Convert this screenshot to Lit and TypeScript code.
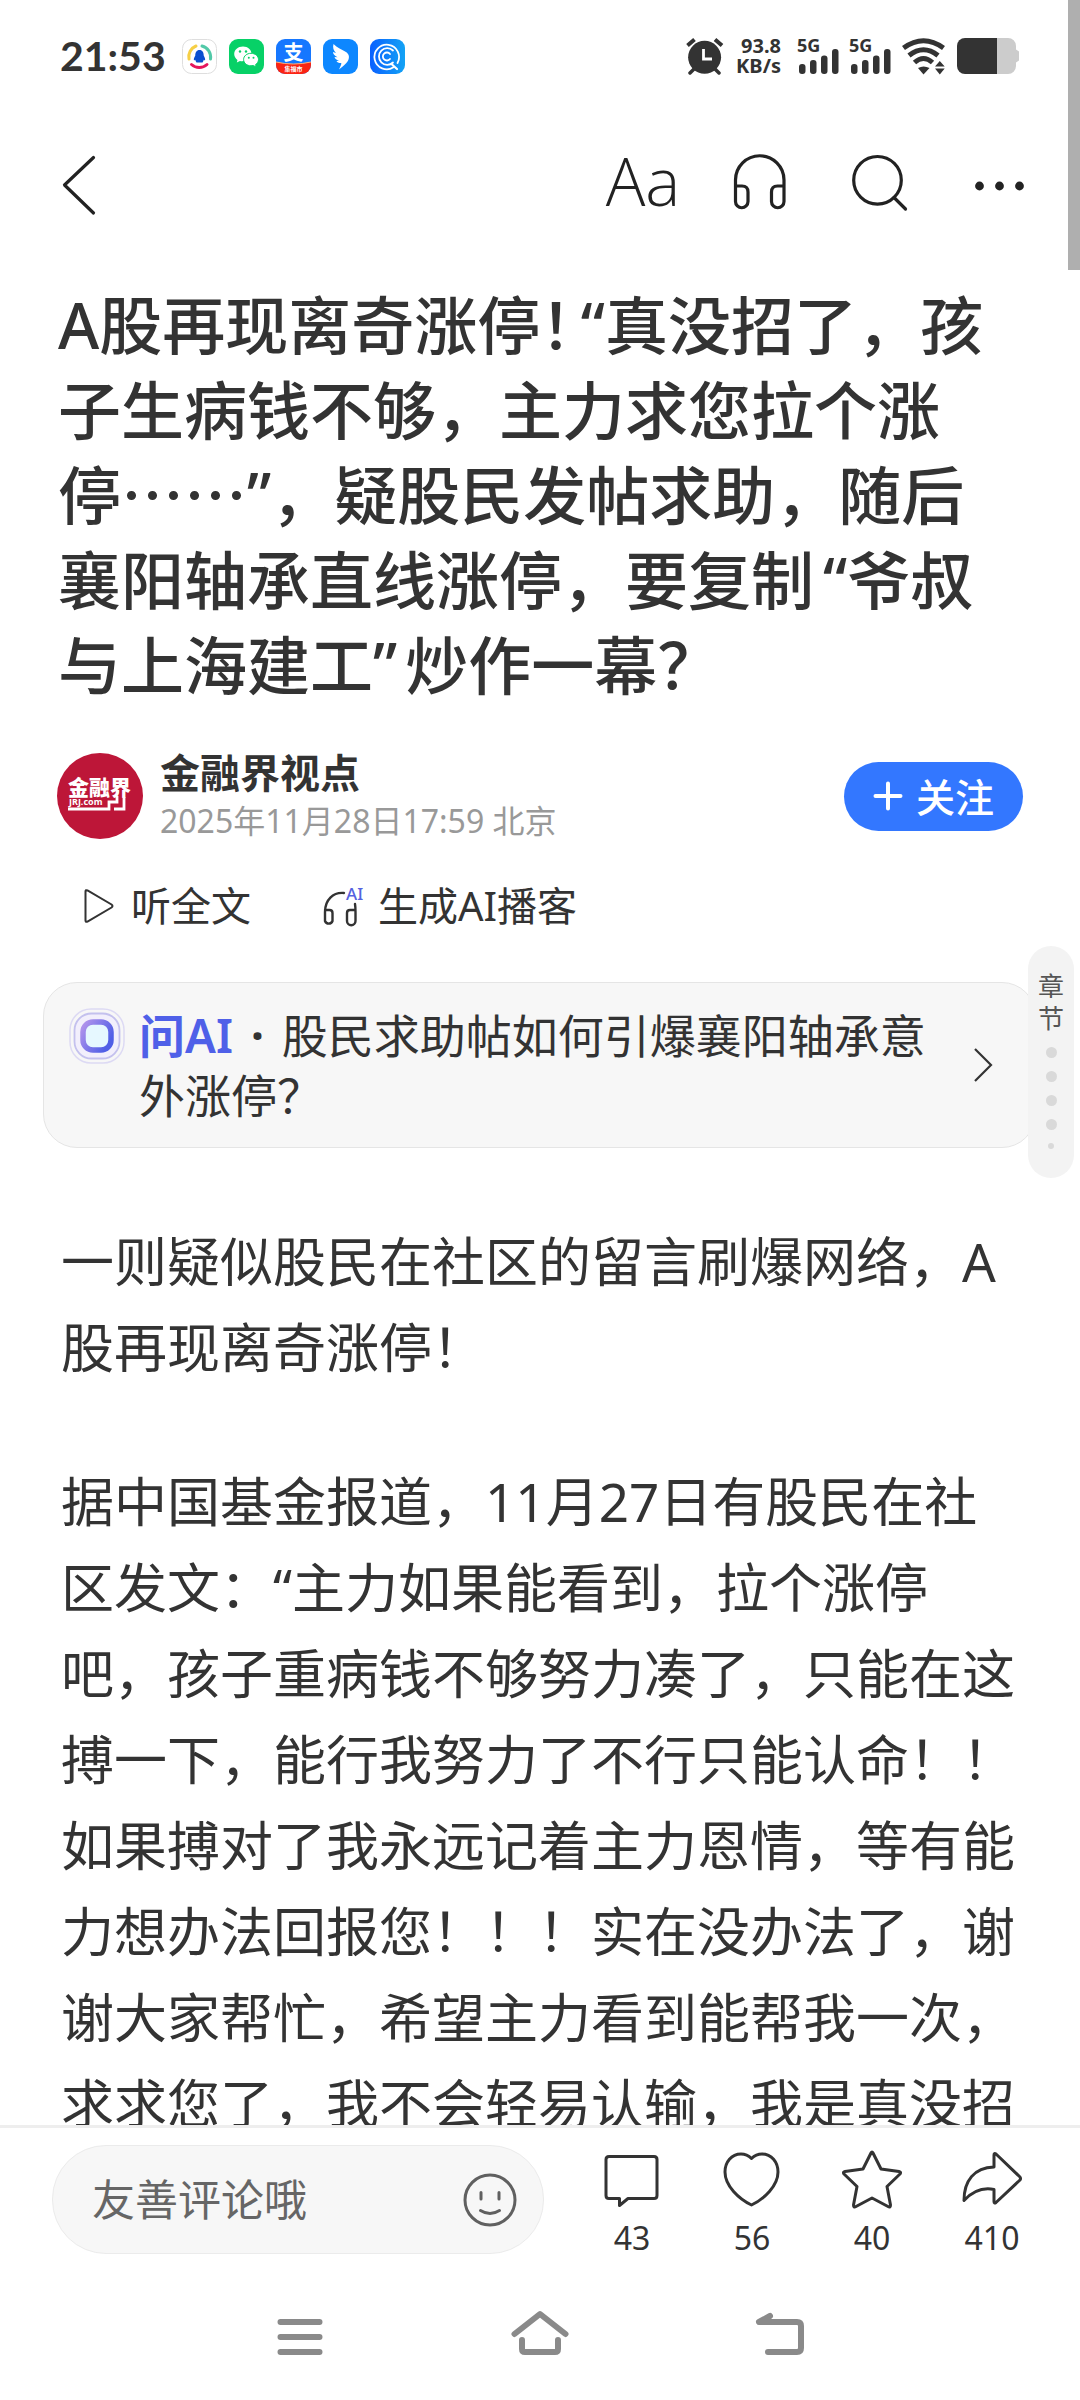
import { LitElement, html, svg, css } from "lit";
import { customElement } from "lit/decorators.js";

const sans = css`"Noto Sans", "Noto Sans CJK SC", sans-serif`;

const appIcons = [
  svg`<svg class="app" viewBox="0 0 35 35" aria-hidden="true">
    <rect x="0.5" y="0.5" width="34" height="34" rx="9" fill="#fff" stroke="#dedede"/>
    <g fill="none" stroke-width="3" stroke-linecap="round">
      <path d="M7 20 A11.5 11.5 0 0 1 14 7" stroke="#f6cf45"/>
      <path d="M20 7 A11.5 11.5 0 0 1 28.500 20" stroke="#52c9a8"/>
      <path d="M9.500 25.500 A11.5 11.5 0 0 0 25 25.500" stroke="#e5155c"/>
    </g>
    <path d="M17.500 11 C14.500 11 13.200 13.500 13.300 16.500 C12.200 18.500 11.500 20 12 21.500 L13.200 20.800 C13.500 22 14 23 14.500 23.500 H20.500 C21 23 21.500 22 21.800 20.800 L23 21.500 C23.500 20 22.800 18.500 21.700 16.500 C21.800 13.500 20.500 11 17.500 11Z" fill="#0b4fd0"/>
  </svg>`,
  svg`<svg class="app" viewBox="0 0 35 35" aria-hidden="true">
    <rect width="35" height="35" rx="9" fill="#07d167"/>
    <path d="M14 7.500 C9 7.500 5.200 10.800 5.200 15 C5.200 17.400 6.500 19.500 8.500 20.900 L7.800 23.600 L11 22 C15 23 22.500 20.800 22.500 15 C22.500 10.800 19 7.500 14 7.500Z" fill="#fff"/>
    <path d="M22 14.300 C17.800 14.300 14.600 17.100 14.600 20.500 C14.600 24 17.800 26.800 22 26.800 L24.300 26.500 L27.200 28 L26.600 25.500 C28.400 24.400 29.500 22.600 29.500 20.500 C29.500 17.100 26.200 14.300 22 14.300Z" fill="#fff" stroke="#07d167" stroke-width="1"/>
    <g fill="#07d167"><circle cx="11" cy="12.500" r="1.200"/><circle cx="17" cy="12.500" r="1.200"/><circle cx="19.800" cy="18.700" r="1"/><circle cx="24.500" cy="18.700" r="1"/></g>
  </svg>`,
  svg`<svg class="app" viewBox="0 0 35 35" aria-hidden="true">
    <defs><clipPath id="pay"><rect width="35" height="35" rx="9"/></clipPath></defs>
    <g clip-path="url(#pay)">
      <rect width="35" height="35" fill="#1677ff"/>
      <path d="M0 23 Q17.500 27 35 23 V35 H0Z" fill="#fb2413"/>
      <path d="M0 23 Q17.500 27 35 23" fill="none" stroke="#ffb27a" stroke-width="1"/>
    </g>
    <text x="17.500" y="20.500" text-anchor="middle" font-size="20" font-weight="700" fill="#fff">支</text>
    <text x="17.500" y="32" text-anchor="middle" font-size="6" font-weight="700" fill="#fff">集福市</text>
  </svg>`,
  svg`<svg class="app" viewBox="0 0 35 35" aria-hidden="true">
    <rect width="35" height="35" rx="9" fill="#0d87ff"/>
    <path d="M10.500 5 C14 9 19 10.500 23 13 C26 15 26.500 18 25.500 20.500 C24.500 24 20 27 16 30.500 C17 28 18.500 26 18.300 24 C16 24.200 14.300 23.500 13.500 22 L16 21.700 C13.500 21 12 19.800 11.500 18 L14.500 18.200 C11.500 16.800 10 15 10 13 L13 14 C10.500 11.500 9.500 8.500 10.500 5Z" fill="#fff"/>
  </svg>`,
  svg`<svg class="app" viewBox="0 0 35 35" aria-hidden="true">
    <defs><linearGradient id="cq" x1="0" y1="0" x2="1" y2="0"><stop offset="0" stop-color="#0a60ff"/><stop offset="1" stop-color="#13a3f5"/></linearGradient></defs>
    <rect width="35" height="35" rx="9" fill="url(#cq)"/>
    <g fill="none" stroke="#fff" stroke-width="1.800" stroke-linecap="round">
      <path d="M27.500 24 A12.300 12.300 0 1 0 23.500 28.300"/>
      <path d="M23 11.500 A8.300 8.300 0 1 0 23 23.500"/>
      <path d="M20 15 A4 4 0 1 0 20 20"/>
      <path d="M22 25.500 L27 30" stroke-width="2.200"/>
    </g>
  </svg>`,
];

const signal = svg`<svg class="signal" viewBox="0 0 42 38" role="img" aria-label="5G">
  <text x="0" y="15" font-size="18" font-weight="700" fill="#333">5G</text>
  <g fill="#333"><rect x="2" y="27" width="6.500" height="10" rx="3"/><rect x="13" y="23" width="6.500" height="14" rx="3"/><rect x="24" y="18.500" width="6.500" height="18.500" rx="3"/><rect x="35" y="12" width="6.500" height="25" rx="3"/></g>
</svg>`;

@customElement("status-bar")
class StatusBar extends LitElement {
  static styles = css`
    :host { display: flex; align-items: center; justify-content: space-between; height: 112px; padding: 0 60px 0 60px; color: #333; font-family: ${sans}; }
    .side { display: flex; align-items: center; gap: 12px; }
    .marks { gap: 10px; }
    .time { font: 700 41px/48px "Lato", sans-serif; margin-right: 4px; }
    .app { width: 35px; height: 35px; display: block; font-family: ${sans}; }
    .rate { display: flex; flex-direction: column; align-items: flex-end; margin: 0 6px 0 2px; font-size: 20px; line-height: 20px; font-weight: 700; }
    .signal { width: 42px; height: 38px; display: block; overflow: visible; font-family: ${sans}; }
    .glyph { height: 38px; display: block; }
  `;
  render() {
    return html`
      <div class="side"><span class="time">21:53</span>${appIcons}</div>
      <div class="side marks">
        <svg class="glyph" width="38" viewBox="0 0 38 38" role="img" aria-label="闹钟">
          <circle cx="18.600" cy="20.300" r="16.500" fill="#333"/>
          <path d="M17.500 12 V22 H26" fill="none" stroke="#fff" stroke-width="2.800"/>
          <g stroke="#333" stroke-width="4"><path d="M1.500 8.500 L8.500 2.500 M29 2.500 L36 8.500"/><path d="M4 36 L9 31 M33 36 L28 31" stroke-linecap="round" stroke-width="3.500"/></g>
        </svg>
        <div class="rate"><span>93.8</span><span>KB/s</span></div>
        ${signal}${signal}
        <svg class="glyph" width="45" viewBox="0 0 45 38" role="img" aria-label="Wi-Fi">
          <g fill="none" stroke="#333" stroke-width="5">
            <path d="M2.500 11 Q22.500 -3.500 42.500 11"/><path d="M8 18.500 Q22.500 7 37 18.500"/><path d="M13.500 25.500 Q22.500 17.500 31.500 25.500"/>
          </g>
          <path d="M17 31 Q22.500 28 28.500 31 L22.500 37.500Z" fill="#333"/>
          <path d="M34 29.500 L38.800 24 L43.700 29.500Z M34 31.500 H43.700 L38.800 37.500Z" fill="#333"/>
        </svg>
        <svg class="glyph" width="64" viewBox="0 0 64 38" role="img" aria-label="电量">
          <path d="M41 1 H52 A8 8 0 0 1 60 9 V12.500 L63 14.500 V23.500 L60 25.500 V29 A8 8 0 0 1 52 37 H41Z" fill="#ccc"/>
          <path d="M41 1 H9 A8 8 0 0 0 1 9 V29 A8 8 0 0 0 9 37 H41Z" fill="#333"/>
        </svg>
      </div>`;
  }
}

@customElement("reader-toolbar")
class ReaderToolbar extends LitElement {
  static styles = css`
    :host { display: flex; align-items: center; justify-content: space-between; height: 146px; padding: 0 20px 0 62px; }
    button { border: 0; background: none; padding: 0; margin: 0; color: #222; display: flex; align-items: center; justify-content: center; }
    .tools { display: flex; }
    .tool { width: 120px; height: 80px; }
    .type { font: 300 66px/64px "Open Sans", sans-serif; padding: 0 0 10px 6px; }
    .tool svg, .back svg { height: 64px; display: block; fill: none; stroke: currentColor; stroke-width: 3.2; stroke-linecap: round; stroke-linejoin: round; }
    .solid { fill: #222; stroke: none; }
  `;
  render() {
    return html`
      <button class="back" aria-label="返回"><svg width="34" viewBox="0 0 34 64"><path d="M31.500 4.500 L2.500 32 L31.500 60"/></svg></button>
      <div class="tools">
        <button class="tool type" title="字体">Aa</button>
        <button class="tool" aria-label="听"><svg width="64" viewBox="0 0 64 64"><path d="M7.500 33 H14 Q20 33 20 39 V48.500 A6.250 6.250 0 0 1 7.500 48.500 V27 A24.250 24.250 0 0 1 56 27 V48.500 A6.250 6.250 0 0 1 43.500 48.500 V39 Q43.500 33 49.500 33 H56"/></svg></button>
        <button class="tool" aria-label="搜索"><svg width="64" viewBox="0 0 64 64"><circle cx="29.500" cy="27.300" r="23.800"/><path d="M46 44.500 L57.500 56"/></svg></button>
        <button class="tool" aria-label="更多"><svg width="64" viewBox="0 0 64 64"><g class="solid"><circle cx="11.500" cy="33" r="4.400"/><circle cx="31.500" cy="33" r="4.400"/><circle cx="51.500" cy="33" r="4.400"/></g></svg></button>
      </div>`;
  }
}

@customElement("news-article")
class NewsArticle extends LitElement {
  static styles = css`
    :host { display: block; color: #333; font-family: ${sans}; text-spacing-trim: space-all; text-autospace: no-autospace; }
    button { border: 0; background: none; padding: 0; margin: 0; font: inherit; color: inherit; display: flex; align-items: center; }
    svg { display: block; flex: none; overflow: visible; }
    .cjk { font-family: "Noto Sans CJK SC", sans-serif; line-height: 1; }
    .half { font-feature-settings: "halt"; }
    .open { margin-left: 9px; }
    .close { margin-right: 8px; }
    h1 { margin: 0; padding: 24px 58px 0; font-size: 63px; line-height: 85px; font-weight: 500; }
    .author { display: flex; align-items: center; margin-top: 46px; padding: 0 57px; }
    .who { flex: 1; display: flex; flex-direction: column; gap: 10px; padding-left: 17px; }
    .name { font-size: 40px; line-height: 40px; font-weight: 700; color: inherit; text-decoration: none; }
    .date { font-size: 32px; line-height: 36px; color: #999; }
    .follow { background: #3377ff; color: #fff; font-size: 39px; line-height: 69px; font-weight: 500; border-radius: 35px; padding: 0 29px 0 29px; gap: 13px; }
    .listen { display: flex; gap: 72px; margin-top: 37px; padding: 0 84px; font-size: 40px; line-height: 60px; }
    .listen button { gap: 15px; }
    .ask { display: flex; align-items: center; margin: 46px 44px 0 43px; padding: 22px 42px 22px 25px; background: #f7f7f7; border: 1px solid #e5e5e5; border-radius: 34px; font-size: 46px; line-height: 60px; color: inherit; text-decoration: none; }
    .orb { align-self: flex-start; margin: 3px 14px 0 0; }
    .question { flex: 1; padding-right: 30px; }
    .tag { color: #4f60e8; font-weight: 600; }
    .point { margin: 0 6px; font-weight: 700; }
    .copy { padding: 71px 60px 0 61px; font-size: 53px; line-height: 86px; }
    p { margin: 0 0 68px; }
  `;
  render() {
    return html`
      <h1>A股再现离奇涨停<span class="cjk half">！</span><span class="open">“</span>真没招了，孩子生病钱不够，主力求您拉个涨停<span class="cjk">……</span>”，疑股民发帖求助，随后襄阳轴承直线涨停，要复制<span class="open">“</span>爷叔与上海建工<span class="close">”</span>炒作一幕？</h1>
      <div class="author">
        <svg width="86" height="86" viewBox="0 0 86 86" aria-hidden="true">
          <circle cx="43" cy="43" r="43" fill="#bd1638"/>
          <text class="cjk" x="11" y="42" font-size="21" font-weight="900" fill="#fff">金融界</text>
          <text x="12" y="52" font-size="9" font-weight="700" fill="#fff">JRJ.com</text>
          <path d="M11 56 H52 V49 H60 V43 M67 44 V56 H57" fill="none" stroke="#fff" stroke-width="2.800"/>
        </svg>
        <div class="who">
          <a class="name" href="#author">金融界视点</a>
          <span class="date">2025年11月28日17:59 北京</span>
        </div>
        <button class="follow">
          <svg width="30" height="30" viewBox="0 0 30 30"><path d="M15 2.500 V27.500 M2.500 15 H27.500" stroke="#fff" stroke-width="4" stroke-linecap="round"/></svg>关注
        </button>
      </div>
      <div class="listen">
        <button>
          <svg width="32" height="36" viewBox="0 0 32 36"><path d="M1.500 3.500 Q1.500 1.500 3.500 2.500 L27.500 16.500 Q29.500 18 27.500 19.500 L3.500 33.500 Q1.500 34.500 1.500 32.500Z" fill="none" stroke="#333" stroke-width="2"/></svg>听全文
        </button>
        <button>
          <svg width="40" height="42" viewBox="0 0 40 42">
            <path d="M21 8 C10 7 2 15 2 27 V36 A4 4 0 0 0 9.500 36 V28 Q9.500 25 6.500 25 H2 M32 19 C32.500 22 32.500 24 32.500 27 V36 A4 4 0 0 1 24 36 V28 Q24 25 27 25 H32" fill="none" stroke="#333" stroke-width="2.400" stroke-linecap="round"/>
            <text x="23" y="15" font-size="17" font-weight="500" fill="#5562e0">AI</text>
          </svg>生成AI播客
        </button>
      </div>
      <a class="ask" href="#ask">
        <svg class="orb" width="56" height="56" viewBox="0 0 56 56" aria-hidden="true">
          <defs><linearGradient id="orb" x1="0" y1="0" x2="1" y2="0.600"><stop offset="0" stop-color="#b495ec"/><stop offset="1" stop-color="#505fe6"/></linearGradient></defs>
          <rect x="1" y="1" width="54" height="54" rx="21" fill="none" stroke="#dddaf4" stroke-width="1.500"/>
          <rect x="5.500" y="5.500" width="45" height="45" rx="17" fill="#f2effc" stroke="#c4c1ee" stroke-width="1.800"/>
          <rect x="14" y="14" width="28" height="28" rx="10" fill="#e6f8ff" stroke="url(#orb)" stroke-width="5.500"/>
        </svg>
        <span class="question"><span class="tag">问AI</span> <span class="point">·</span> 股民求助帖如何引爆襄阳轴承意外涨停？</span>
        <svg width="20" height="36" viewBox="0 0 20 36"><path d="M2 2 L18 18 L2 34" fill="none" stroke="#333" stroke-width="2.200"/></svg>
      </a>
      <div class="copy">
        <p>一则疑似股民在社区的留言刷爆网络，A股再现离奇涨停！</p>
        <p>据中国基金报道，11月27日有股民在社区发文：“主力如果能看到，拉个涨停吧，孩子重病钱不够努力凑了，只能在这搏一下，能行我努力了不行只能认命！！如果搏对了我永远记着主力恩情，等有能力想办法回报您！！！实在没办法了，谢谢大家帮忙，希望主力看到能帮我一次，求求您了，我不会轻易认输，我是真没招</p>
      </div>`;
  }
}

@customElement("comment-bar")
class CommentBar extends LitElement {
  static styles = css`
    :host { display: flex; align-items: flex-end; gap: 28px; padding: 17px 28px 18px 52px; border-top: 3px solid #eee; background: #fff; font-family: ${sans}; color: #333; }
    button { border: 0; background: none; padding: 0; margin: 0; font: inherit; color: inherit; }
    svg { display: block; fill: none; stroke: currentColor; stroke-linejoin: round; stroke-linecap: round; }
    .field { flex: 1; min-width: 0; display: flex; align-items: center; height: 107px; border: 1px solid #ebebeb; border-radius: 54px; background: #f7f7f7; padding: 0 26px 0 39px; color: #606060; }
    input { flex: 1; min-width: 0; width: 0; border: 0; background: none; padding: 0; outline: none; font: 400 43px/60px ${sans}; color: #333; }
    input::placeholder { color: #666; opacity: 1; }
    .actions { display: flex; }
    .action { width: 120px; display: flex; flex-direction: column; align-items: center; gap: 12px; font-size: 32px; line-height: 32px; }
  `;
  private actions = [
    { label: "评论", count: 43, shape: svg`<path d="M7 6.500 H52 Q55 6.500 55 9.500 V45.500 Q55 48.500 52 48.500 H26 L17.500 55.500 V48.500 H7 Q4 48.500 4 45.500 V9.500 Q4 6.500 7 6.500Z"/>` },
    { label: "喜欢", count: 56, shape: svg`<path d="M29.500 8.500 C26 5 22.500 4 19 4 C9.500 4 3 12 3 22 C3 36 17 49 29.500 55 C42 49 56 36 56 22 C56 12 49.500 4 40 4 C36.500 4 33 5 29.500 8.500Z"/>` },
    { label: "收藏", count: 40, shape: svg`<path d="M29 3 Q30 1 31 3 L39 19 L57 21.500 Q59.500 22 58 24 L45 36.500 L48.500 55 Q48.500 58 46 56.500 L30 48 L14 56.500 Q11.500 58 11.500 55 L15 36.500 L2 24 Q0.500 22 3 21.500 L21 19Z"/>` },
    { label: "分享", count: 410, shape: svg`<path d="M32 17 V5 Q32 2.500 34 4 L58 27 Q59 28.500 58 30 L34 52.500 Q32 54 32 51.500 V39.500 C20 37 10 42 2 50.500 C2 31 12 17.500 32 17Z"/>` },
  ];
  render() {
    return html`
      <div class="field">
        <input type="text" aria-label="评论" placeholder="友善评论哦" />
        <button aria-label="表情"><svg width="54" height="54" viewBox="0 0 54 54" stroke-width="3"><circle cx="27" cy="27" r="25"/><path d="M18 19.500 V26 M36 19.500 V26 M17.500 37.500 Q27 43.500 36.500 37.500"/></svg></button>
      </div>
      <div class="actions">
        ${this.actions.map((a) => html`<button class="action" title=${a.label}><svg width="60" height="60" viewBox="0 0 60 60" stroke-width="3">${a.shape}</svg><span>${a.count}</span></button>`)}
      </div>`;
  }
}

@customElement("system-nav")
class SystemNav extends LitElement {
  static styles = css`
    :host { display: flex; justify-content: center; align-items: center; height: 128px; background: #fff; }
    button { border: 0; background: none; padding: 0; margin: 0; width: 240px; display: flex; justify-content: center; }
    svg { width: 60px; height: 60px; display: block; fill: none; stroke: #8a8a8a; stroke-width: 6; stroke-linecap: round; stroke-linejoin: round; }
  `;
  render() {
    return html`
      <button aria-label="最近任务"><svg viewBox="0 0 60 60"><path d="M10.500 16 H49.500 M10.500 31 H49.500 M10.500 46 H49.500"/></svg></button>
      <button aria-label="主屏幕"><svg viewBox="0 0 60 60"><path d="M4.500 28 L30 8 L55.500 28 M12 34 V43 Q12 46 15 46 H45 Q48 46 48 43 V34"/></svg></button>
      <button aria-label="系统返回"><svg viewBox="0 0 60 60"><path d="M20 10 L9 16 H47 Q51 16 51 20 V42 Q51 46 47 46 H18"/></svg></button>`;
  }
}

@customElement("app-root")
class AppRoot extends LitElement {
  static styles = css`
    :host { display: flex; flex-direction: column; height: 100vh; position: relative; overflow: hidden; background: #fff; font-family: ${sans}; }
    main { flex: 1; min-height: 0; overflow: hidden; }
    .chapters { position: absolute; top: 946px; right: 6px; width: 46px; border: 0; margin: 0; padding: 24px 0 29px; border-radius: 23px; background: #f3f3f3; color: #555; font: 400 26px/32px ${sans}; display: flex; flex-direction: column; align-items: center; gap: 13px; }
    .label { width: 26px; }
    .dot { width: 11px; height: 11px; border-radius: 50%; background: #d9d9d9; }
    .tiny { width: 6px; height: 6px; }
    .thumb { position: absolute; top: 0; right: 0; width: 12px; height: 270px; background: #afafaf; }
  `;
  render() {
    return html`
      <status-bar></status-bar>
      <reader-toolbar></reader-toolbar>
      <main><news-article></news-article></main>
      <comment-bar></comment-bar>
      <system-nav></system-nav>
      <button class="chapters">
        <span class="label">章节</span>
        <span class="dot"></span><span class="dot"></span><span class="dot"></span><span class="dot"></span><span class="dot tiny"></span>
      </button>
      <div class="thumb"></div>`;
  }
}
